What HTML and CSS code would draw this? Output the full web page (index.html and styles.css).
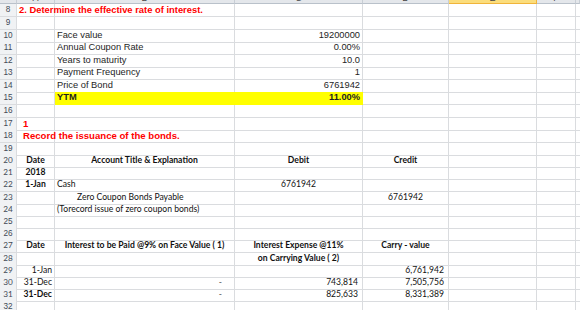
FILE: index.html
```html
<!DOCTYPE html>
<html lang="en">
<head>
    <meta charset="UTF-8">
    <meta name="viewport" content="width=device-width, initial-scale=1.0">
    <title>Bond YTM</title>
    <link rel="stylesheet" href="styles.css">
</head>
<body>
<div class="sheet">
    <!-- column headers, mostly scrolled out of view -->
    <div class="row colhead">
        <div></div><div><span>A</span></div><div><span>B</span></div><div><span>C</span></div><div><span>D</span></div><div class="sel"><span>E</span></div><div><span>F</span></div><div></div>
    </div>

    <div class="row h13"><div class="rh">8</div><div class="red title">2. Determine the effective rate of interest.</div><div></div><div></div><div></div><div></div><div></div><div></div></div>
    <div class="row h13"><div class="rh">9</div><div></div><div></div><div></div><div></div><div></div><div></div><div></div></div>
    <div class="row h12"><div class="rh">10</div><div></div><div>Face value</div><div class="r">19200000</div><div></div><div></div><div></div><div></div></div>
    <div class="row h13"><div class="rh">11</div><div></div><div>Annual Coupon Rate</div><div class="r">0.00%</div><div></div><div></div><div></div><div></div></div>
    <div class="row h12"><div class="rh">12</div><div></div><div>Years to maturity</div><div class="r">10.0</div><div></div><div></div><div></div><div></div></div>
    <div class="row h13"><div class="rh">13</div><div></div><div>Payment Frequency</div><div class="r">1</div><div></div><div></div><div></div><div></div></div>
    <div class="row h12"><div class="rh">14</div><div></div><div>Price of Bond</div><div class="r">6761942</div><div></div><div></div><div></div><div></div></div>
    <div class="row h13"><div class="rh">15</div><div></div><div class="yel b">YTM</div><div class="yel b r">11.00%</div><div></div><div></div><div></div><div></div></div>
    <div class="row h13"><div class="rh">16</div><div></div><div></div><div></div><div></div><div></div><div></div><div></div></div>
    <div class="row h12"><div class="rh">17</div><div class="red ind">1</div><div></div><div></div><div></div><div></div><div></div><div></div></div>
    <div class="row h13"><div class="rh">18</div><div class="red ind">Record the issuance of the bonds.</div><div></div><div></div><div></div><div></div><div></div><div></div></div>
    <div class="row h12"><div class="rh">19</div><div></div><div></div><div></div><div></div><div></div><div></div><div></div></div>

    <!-- journal entry -->
    <div class="row h12 cal"><div class="rh">20</div><div class="b m">Date</div><div class="b m">Account Title &amp; Explanation</div><div class="b m">Debit</div><div class="b m">Credit</div><div></div><div></div><div></div></div>
    <div class="row h12 cal"><div class="rh">21</div><div class="b m">2018</div><div></div><div></div><div></div><div></div><div></div><div></div></div>
    <div class="row h13 cal"><div class="rh">22</div><div class="b m">1-Jan</div><div>Cash</div><div class="m">6761942</div><div></div><div></div><div></div><div></div></div>
    <div class="row h12 cal"><div class="rh">23</div><div></div><div class="sub">Zero Coupon Bonds Payable</div><div></div><div class="m">6761942</div><div></div><div></div><div></div></div>
    <div class="row h12 cal"><div class="rh">24</div><div></div><div>(Torecord issue of zero coupon bonds)</div><div></div><div></div><div></div><div></div><div></div></div>
    <div class="row h12"><div class="rh">25</div><div></div><div></div><div></div><div></div><div></div><div></div><div></div></div>
    <div class="row h12"><div class="rh">26</div><div></div><div></div><div></div><div></div><div></div><div></div><div></div></div>

    <!-- amortization schedule -->
    <div class="row h13 cal"><div class="rh">27</div><div class="b m">Date</div><div class="b m">Interest to be Paid @9% on Face Value ( 1)</div><div class="b m">Interest Expense @11%</div><div class="b m">Carry - value</div><div></div><div></div><div></div></div>
    <div class="row h12 cal"><div class="rh">28</div><div></div><div></div><div class="b m">on Carrying Value ( 2)</div><div></div><div></div><div></div><div></div></div>
    <div class="row h12 cal"><div class="rh">29</div><div class="r">1-Jan</div><div></div><div></div><div class="r acc">6,761,942</div><div></div><div></div><div></div></div>
    <div class="row h12 cal"><div class="rh">30</div><div class="r">31-Dec</div><div class="r dash">-</div><div class="r acc">743,814</div><div class="r acc">7,505,756</div><div></div><div></div><div></div></div>
    <div class="row h12 cal"><div class="rh">31</div><div class="b r">31-Dec</div><div class="r dash">-</div><div class="r acc">825,633</div><div class="r acc">8,331,389</div><div></div><div></div><div></div></div>
    <div class="row h12"><div class="rh">32</div><div></div><div></div><div></div><div></div><div></div><div></div><div></div></div>
</div>
</body>
</html>
```

FILE: styles.css
```css
body {
    margin: 0;
    font-family: "Liberation Sans", Arial, sans-serif;
    font-size: 9.3px;
    color: #1e1e1e;
    background: #fff;
    overflow: hidden;
}
.sheet {
    width: 580px;
}
.row {
    display: grid;
    grid-template-columns: 17px 38px 180px 128px 86px 88px 39px 1fr;
}
.h12 {
    height: 12px;
}
.h13 {
    height: 13px;
}
.row > div {
    box-sizing: border-box;
    display: flex;
    align-items: flex-end;
    white-space: nowrap;
    line-height: 11px;
    padding: 0 2px 1px;
    border-right: 1px solid #dadcdf;
    border-bottom: 1px solid #dadcdf;
}
.colhead {
    height: 4px;
}
.colhead > div {
    display: block;
    overflow: hidden;
    padding: 0;
    text-align: center;
    font-size: 9px;
    color: #444;
    background: #e4e7eb;
    border-right-color: #c8ced5;
    border-bottom-color: #b9c1ca;
}
.colhead span {
    display: block;
    margin-top: -7px;
}
.colhead > .sel {
    background: #fbdd7c;
    border-bottom-color: #f0b43a;
    border-right-color: #f0b43a;
}
.row > .rh {
    justify-content: center;
    padding: 0 0 1px;
    font-size: 8.2px;
    color: #3f4a56;
    background: #f0f2f4;
}
.red {
    color: #ff0000;
    font-weight: bold;
    font-size: 9.6px;
}
.title {
    font-size: 9.4px;
}
.ind {
    padding-left: 6px !important;
}
.b {
    font-weight: bold;
}
.r {
    justify-content: flex-end;
}
.m {
    justify-content: center;
}
.row > .yel {
    background: #ffff00;
    border-color: #ffff00;
}
.cal {
    font-family: Lato, "Liberation Sans", sans-serif;
    font-size: 8.6px;
    color: #111;
}
.row > .sub {
    padding-left: 22px;
}
.row > .dash {
    padding-right: 12px;
    color: #555;
}
.row > .acc {
    padding-right: 4px;
}
```
